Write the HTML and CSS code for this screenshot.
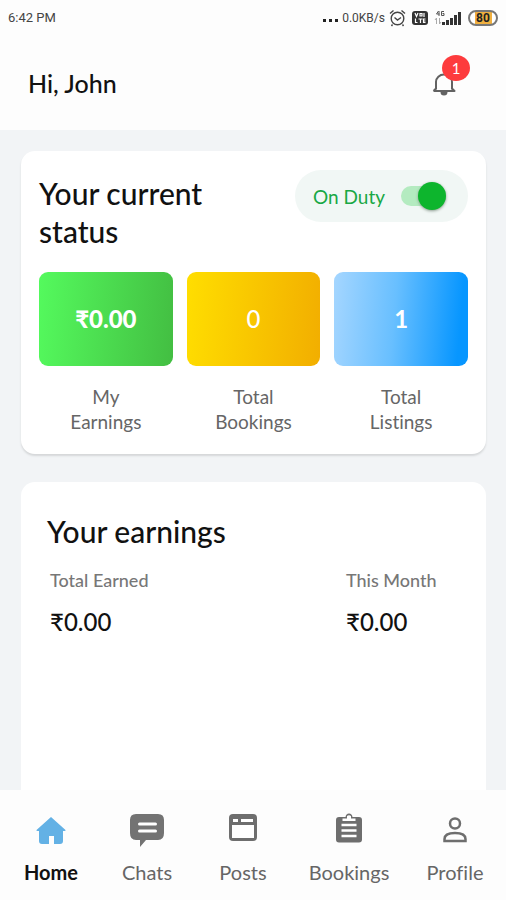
FILE: index.html
```html
<!DOCTYPE html>
<html lang="en">
<head>
<meta charset="utf-8">
<meta name="viewport" content="width=device-width, initial-scale=1">
<title>Home</title>
<link rel="stylesheet" href="styles.css">
</head>
<body>
<div class="statusbar">
  <span>6:42 PM</span>
  <div class="indicators">
    <svg width="17" height="16" viewBox="0 0 17 16"><g fill="#222"><rect x="0" y="9" width="3" height="3"/><rect x="6" y="9" width="3" height="3"/><rect x="12" y="9" width="3" height="3"/></g></svg>
    <span class="rate">0.0KB/s</span>
    <svg class="alarm" width="17" height="18" viewBox="0 0 17 18" fill="none" stroke="#444" stroke-width="1.4"><circle cx="8.500" cy="9.500" r="6.300"/><path d="M1 4.500 4.500 1.500M16 4.500 12.500 1.500M3.500 15.500 2.500 17M13.500 15.500l1 1.500M5.500 8.500l3 2.500 3.500-2.500"/></svg>
    <svg class="volte" width="16" height="16" viewBox="0 0 16 16"><rect y="1" width="16" height="14" rx="3" fill="#333"/><g fill="none" stroke="#fff" stroke-width="1.200"><path d="M3 3l1.500 3.500L6 3M8 3.500h2v2.500H8zM12 3v4M3.500 8.500v4h2M6.500 9h4M8.500 9v4M13.500 9h-2v3.500h2M11.500 11h2"/></g></svg>
    <svg class="signal" width="28" height="18" viewBox="0 0 28 18"><g fill="none" stroke="#555" stroke-width="1"><path d="M4.500 2 2.500 5h3M5 2v5M10 2.500H7.500v4H10V4.500H8.500"/><path stroke="#aaa" d="M2.500 9v6M1 11l1.500-2M5.500 9v6l1.500-2"/></g><g fill="#333"><rect x="8" y="13" width="3" height="3"/><rect x="12" y="11" width="3" height="5"/><rect x="16" y="9" width="3" height="7"/><rect x="20" y="6" width="3" height="10"/><rect x="24" y="3" width="3" height="13"/></g></svg>
    <span class="battery">80</span>
  </div>
</div>
<header class="header">
  <h1>Hi, John</h1>
  <button class="bell" type="button" aria-label="Notifications">
    <svg width="24" height="26" viewBox="0 0 24 26"><path d="M4 19.500V12a8 7.500 0 0 1 16 0v7.500M1.500 21h21l-3-3M1.500 21l3-3" fill="none" stroke="#626262" stroke-width="2" stroke-linejoin="round"/><path d="M8.500 22h7a3.500 3.500 0 0 1-7 0z" fill="#626262"/></svg>
    <span class="badge">1</span>
  </button>
</header>
<main class="content">
  <section class="card status">
    <div class="status-head">
      <h2>Your current status</h2>
      <label class="duty">On Duty <input type="checkbox" role="switch" checked></label>
    </div>
    <div class="tiles">
      <div class="tile"><strong class="value green">₹0.00</strong><span>My<br>Earnings</span></div>
      <div class="tile"><strong class="value yellow">0</strong><span>Total<br>Bookings</span></div>
      <div class="tile"><strong class="value blue">1</strong><span>Total<br>Listings</span></div>
    </div>
  </section>
  <section class="card earnings">
    <h2>Your earnings</h2>
    <dl>
      <div><dt>Total Earned</dt><dd>₹0.00</dd></div>
      <div><dt>This Month</dt><dd>₹0.00</dd></div>
    </dl>
  </section>
</main>
<nav class="tabs">
  <a href="#home" class="active">
    <svg width="36" height="36" viewBox="0 0 36 36"><path d="M18 5 32.500 18q.500 1-1 1H30v10q0 3-3 3h-6v-8h-5v8H9q-3 0-3-3V19H4.500q-1.500 0-1-1z" fill="#63b1e5"/></svg>Home</a>
  <a href="#chats">
    <svg width="36" height="36" viewBox="0 0 36 36"><path d="M7 2h22q6 0 6 6v13q0 7-6 7H17l-6 7v-7H7q-6 0-6-7V8q0-6 6-6z" fill="#737373"/><path d="M10.500 12h16M10.500 19h16" stroke="#fff" stroke-width="3" stroke-linecap="round"/></svg>Chats</a>
  <a href="#posts">
    <svg width="36" height="36" viewBox="0 0 36 36"><rect x="4" y="2" width="28" height="27" rx="4" fill="#6e6e6e"/><path d="M8 7h5v3H8zM16 7h12v3H16zM7 13h22v13H7z" fill="#fff"/></svg>Posts</a>
  <a href="#bookings">
    <svg width="36" height="36" viewBox="0 0 36 36"><path d="M8 5h6.500q.500-3.500 3.500-3.500T21.500 5H28q3 0 3 3v19.500q0 3-3 3H8q-3 0-3-3V8q0-3 3-3z" fill="#6e6e6e"/><path d="M11.500 9V6.500H16V4q2-1.500 4 0v2.500h4.500V9z" fill="#fff"/><path d="M10.500 13h15M10.500 18.500h15M10.500 24h15" stroke="#fff" stroke-width="2.500"/></svg>Bookings</a>
  <a href="#profile">
    <svg width="36" height="36" viewBox="0 0 36 36" fill="none" stroke="#6e6e6e" stroke-width="2.500"><circle cx="18" cy="11.500" r="5"/><path d="M7.500 29v-2q0-6 10.500-6t10.500 6v2z"/></svg>Profile</a>
</nav>
</body>
</html>
```
FILE: styles.css
```css
* { box-sizing: border-box; }
body {
  margin: 0;
  min-height: 100vh;
  display: flex;
  flex-direction: column;
  background: #f2f4f6;
  color: #111;
  font-family: Lato, "Noto Sans", sans-serif;
  font-variant-ligatures: none;
}
h1, h2, dl, dd { margin: 0; font-weight: 500; }

.statusbar {
  display: flex;
  justify-content: space-between;
  align-items: center;
  height: 36px;
  padding: 0 8px;
  background: #fdfdfd;
  color: #444;
  font: 13px/16px Roboto, sans-serif;
}
.indicators { display: flex; align-items: center; gap: 2px; }
.rate { font-size: 12px; }
.alarm { margin-left: 2px; }
.volte { margin: 0 4px; }
.battery {
  width: 30px;
  margin-left: 4px;
  border: 2px solid #777;
  border-radius: 8px;
  background: linear-gradient(90deg, #fff 5px, #f0b040 5px, #f0b040 22px, #fff 22px);
  color: #222;
  font-size: 12px;
  font-weight: 700;
  line-height: 12px;
  text-align: center;
}

.header {
  display: flex;
  justify-content: space-between;
  align-items: center;
  height: 94px;
  padding: 0 50px 0 28px;
  background: #fdfdfd;
}
.header h1 { font-size: 25px; line-height: 32px; }
.bell {
  position: relative;
  display: flex;
  padding: 0;
  border: 0;
  background: none;
}
.badge {
  position: absolute;
  top: -15px;
  left: 10px;
  width: 28px;
  border-radius: 50%;
  background: #fd3b3d;
  color: #fff;
  font: 15px/26px Lato, sans-serif;
}

.content {
  flex: 1;
  display: flex;
  flex-direction: column;
  gap: 28px;
  padding: 21px 20px 0 21px;
}
.card { border-radius: 14px; background: #fff; }
.status { padding: 19px 18px 20px; box-shadow: 0 2px 2px #d5d7d9; }
.status-head { display: flex; justify-content: space-between; align-items: flex-start; }
h2 { font-size: 30px; line-height: 38px; }
.status-head h2 { width: 190px; padding-top: 4px; }
.duty {
  display: flex;
  align-items: center;
  gap: 16px;
  height: 52px;
  padding: 0 22px 0 18px;
  border-radius: 26px;
  background: #f1f7f5;
  color: #19a845;
  font-size: 19px;
}
.duty input {
  appearance: none;
  position: relative;
  width: 45px;
  height: 20px;
  margin: 0;
  border-radius: 10px;
  background: #b4ebc0;
}
.duty input::before {
  content: "";
  position: absolute;
  top: -4px;
  right: 0;
  width: 28px;
  height: 28px;
  border-radius: 50%;
  background: #0db52d;
  box-shadow: 0 1px 3px #8a9a8e;
}
.tiles { display: grid; grid-template-columns: repeat(3, 1fr); gap: 14px; padding-top: 22px; }
.tile { color: #666; font-size: 19px; line-height: 25px; text-align: center; }
.value {
  display: block;
  margin-bottom: 18px;
  border-radius: 9px;
  color: #fff;
  font-size: 24px;
  font-weight: 700;
  line-height: 94px;
}
.green { background: linear-gradient(95deg, #54fa5d, #43be42); font-weight: 900; }
.yellow { background: linear-gradient(95deg, #ffde00, #f2ae00); font-weight: 500; }
.blue { background: linear-gradient(95deg, #a5d6ff, #68bfff 45%, #0796ff 92%); }

.earnings { flex: 1; padding: 30px 26px; border-radius: 14px 14px 0 0; }
dl { display: grid; grid-template-columns: 296px 1fr; padding: 18px 3px 0; }
dt { color: #777; font-size: 18px; line-height: 24px; }
dd { padding-top: 13px; font-size: 24px; line-height: 34px; }

.tabs {
  display: grid;
  grid-template-columns: 24fr 24fr 24fr 29fr 24fr;
  height: 110px;
  padding: 22px 3px 0;
  background: #fdfdfd;
}
.tabs a {
  display: flex;
  flex-direction: column;
  align-items: center;
  gap: 10px;
  color: #666;
  font-size: 20px;
  line-height: 28px;
  text-decoration: none;
}
.tabs .active { color: #111; font-weight: 700; }
```
